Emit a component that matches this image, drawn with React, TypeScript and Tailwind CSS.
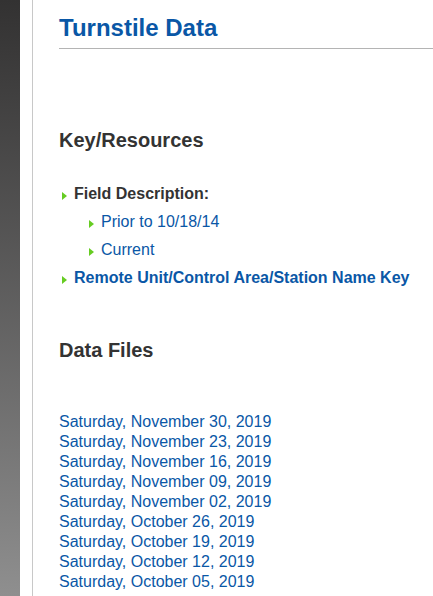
const dates = [
  'Saturday, November 30, 2019',
  'Saturday, November 23, 2019',
  'Saturday, November 16, 2019',
  'Saturday, November 09, 2019',
  'Saturday, November 02, 2019',
  'Saturday, October 26, 2019',
  'Saturday, October 19, 2019',
  'Saturday, October 12, 2019',
  'Saturday, October 05, 2019',
]

const Arrow = () => (
  <span className="inline-block w-0 h-0 border-y-[4.5px] border-y-transparent border-l-[5px] border-l-[#66cc22] mr-[7px] translate-y-[2px]" />
)

export default function App() {
  return (
    <div className="flex h-[596px] overflow-hidden bg-white font-['Liberation_Sans',Arial,sans-serif]">
      <div className="w-[20px] shrink-0 bg-gradient-to-b from-[#333232] to-[#8f8f8f]" />
      <div className="w-[12px] shrink-0" />
      <div className="flex-1 border-l border-[#c8c8c8] pl-[26px]">
        <h1 className="pt-[14px] pb-[6px] text-[24px] leading-[28px] font-bold text-[#0a57a6] border-b border-[#b4b4b4]">
          Turnstile Data
        </h1>

        <h2 className="mt-[79px] text-[20px] leading-[24px] font-bold text-[#333]">Key/Resources</h2>

        <ul className="mt-[28px] text-[16px] leading-[28px]">
          <li className="flex items-center pl-[3px] font-bold text-[#333]">
            <Arrow />
            Field Description:
          </li>
          <li className="flex items-center pl-[30px] text-[#0a57a6]">
            <Arrow />
            Prior to 10/18/14
          </li>
          <li className="flex items-center pl-[30px] text-[#0a57a6]">
            <Arrow />
            Current
          </li>
          <li className="flex items-center pl-[3px] font-bold text-[#0a57a6]">
            <Arrow />
            Remote Unit/Control Area/Station Name Key
          </li>
        </ul>

        <h2 className="mt-[46px] text-[20px] leading-[24px] font-bold text-[#333]">Data Files</h2>

        <div className="mt-[50px] flex flex-col text-[16px] leading-[20px] text-[#0a57a6]">
          {dates.map((d) => (
            <a key={d} href="#" className="w-fit">
              {d}
            </a>
          ))}
        </div>
      </div>
    </div>
  )
}
